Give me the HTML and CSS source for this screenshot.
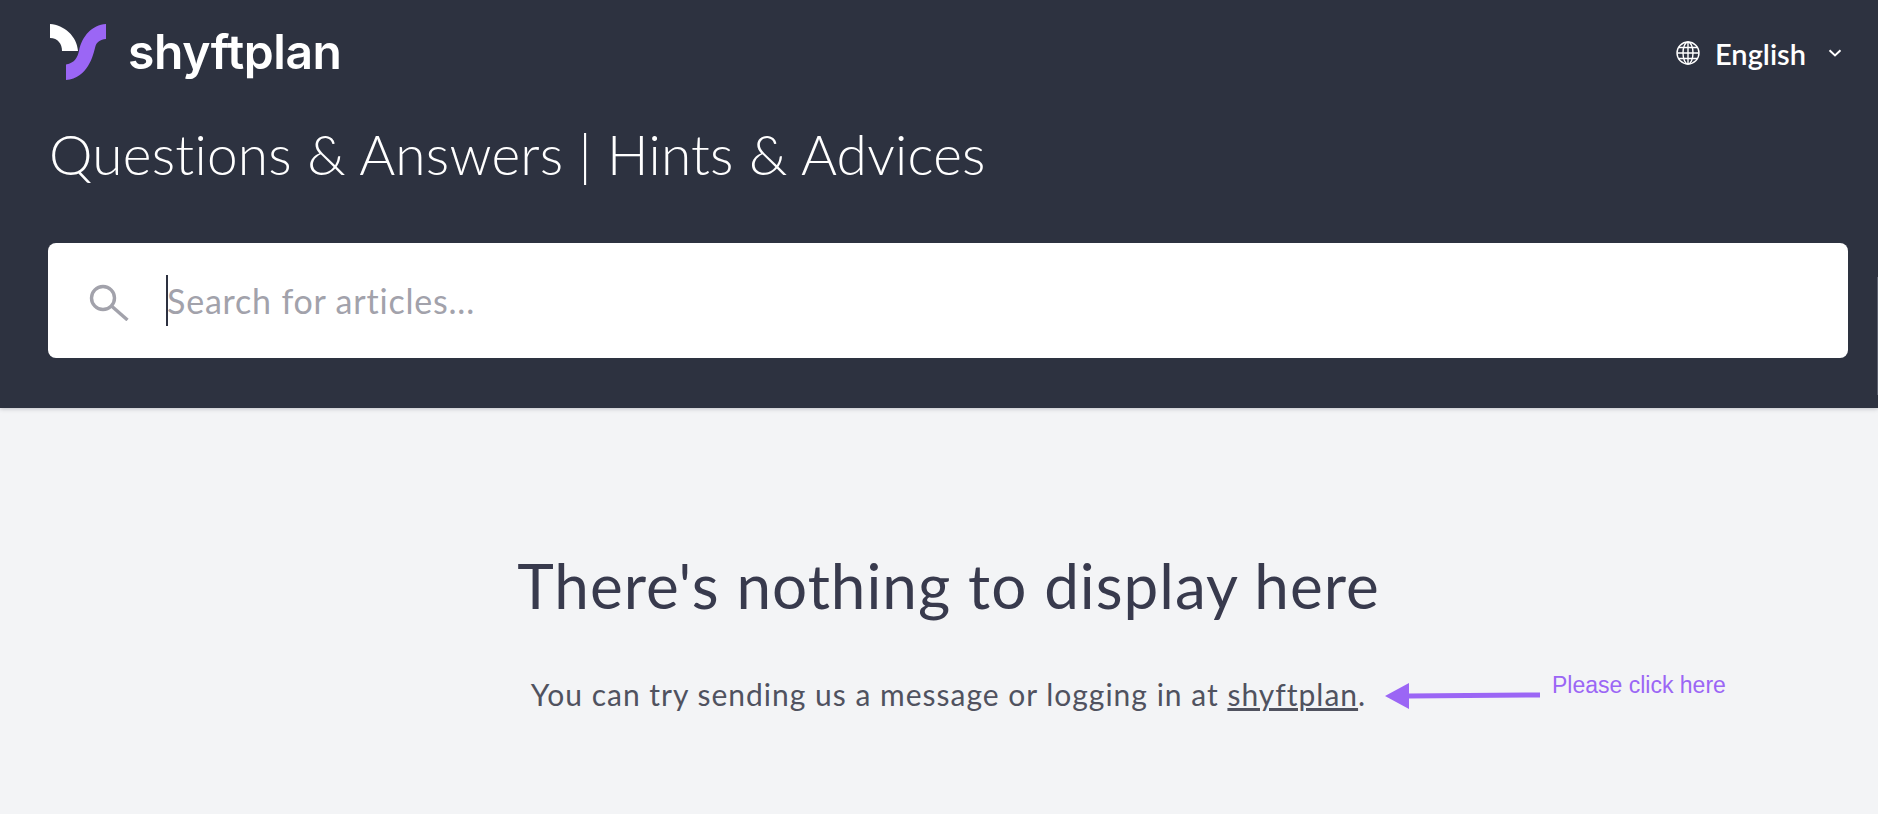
FILE: index.html
```html
<!DOCTYPE html>
<html>
  <head>
    <meta charset="UTF-8" />
    <title>shyftplan Help Center</title>
    <link rel="stylesheet" href="styles.css">
  </head>

  <body>
    <header class="header">
      <div class="topbar">
        <a class="brand" href="#">
          <svg class="brand-mark" viewBox="0 0 56 56">
            <path fill="#ffffff" d="M0 0C14 1 27 12 28 27L12 27C12 20 8 14 0 14Z" />
            <path fill="#9b66f5" d="M56 0L56 15C50 15.5 47 18 45.5 22C43 32 38 54 16 56L16 40.5C25 39 27.5 33 29 27C32 12 42 1 56 0Z" />
          </svg>
          <span class="brand-name">shyftplan</span>
        </a>
        <div class="lang">
          <svg class="lang-globe" viewBox="0 0 24 24" fill="none" stroke="#fff" stroke-width="1.4">
            <circle cx="12" cy="12" r="11" />
            <ellipse cx="12" cy="12" rx="5" ry="11" />
            <path d="M12 1V23M2.8 6.5H21.2M2.8 17.5H21.2M1 12H23" />
          </svg>
          <span class="lang-name">English</span>
          <svg class="lang-chevron" viewBox="0 0 14 8" fill="none" stroke="#fff" stroke-width="2">
            <path d="M1.5 1.2L7 6.4L12.5 1.2" />
          </svg>
        </div>
      </div>

      <h1 class="title">Questions &amp; Answers | Hints &amp; Advices</h1>

      <div class="search">
        <svg class="search-icon" viewBox="0 0 40 37" fill="none" stroke="#a2a2ab" stroke-width="3.4">
          <circle cx="14" cy="14" r="11.5" />
          <path d="M22.5 22L38.5 36" />
        </svg>
        <div class="search-field">
          <span class="caret"></span>
          <span class="placeholder">Search for articles...</span>
        </div>
      </div>
      <span class="scroll-sliver"></span>
    </header>

    <main class="empty">
      <h2 class="empty-title">There's nothing to display here</h2>
      <p class="empty-text">You can try sending us a message or logging in at <a href="#">shyftplan</a>.</p>
    </main>

    <svg class="note-arrow" viewBox="0 0 156 26">
      <path fill="#9b66f5" d="M0 13L24 0V10.5L155 9.5V14.5L24 15.5V26Z" />
    </svg>
    <span class="note-text">Please click here</span>
  </body>
</html>
```

FILE: styles.css
```css
html, body {
  height: 100%;
}

body {
  font-family: Lato, "Open Sans", sans-serif;
  font-variant-ligatures: none;
  margin: 0;
  padding: 0;
  background-color: #f3f4f6;
  overflow: hidden;
  position: relative;
}

.header {
  position: relative;
  box-sizing: border-box;
  height: 408px;
  padding: 24px 36px 0 48px;
  background-color: #2d3240;
  box-shadow: 0 1px 4px rgba(45, 49, 64, 0.25);
}

.topbar {
  display: flex;
  justify-content: space-between;
  align-items: flex-start;
  height: 56px;
}

.brand {
  display: flex;
  align-items: center;
  gap: 22px;
  margin-left: 2px;
  color: #fff;
  text-decoration: none;
}

.brand-mark {
  width: 56px;
  height: 56px;
}

.brand-name {
  font-family: Inter, sans-serif;
  font-size: 48px;
  font-weight: 600;
  letter-spacing: -0.4px;
  line-height: 56px;
  filter: blur(0.7px);
}

.lang {
  display: flex;
  align-items: center;
  height: 60px;
  margin-top: -1px;
  color: #fff;
}

.lang-globe {
  width: 24px;
  height: 24px;
  margin-right: 15px;
}

.lang-name {
  font-size: 29px;
  font-weight: 600;
  margin-right: 22px;
}

.lang-chevron {
  width: 14px;
  height: 8px;
}

.title {
  margin: 41px 0 0 1px;
  color: #fff;
  font-size: 55px;
  font-weight: 300;
  letter-spacing: 0.25px;
  line-height: 66px;
}

.search {
  display: flex;
  align-items: center;
  box-sizing: border-box;
  width: 1800px;
  height: 115px;
  margin-top: 56px;
  padding-left: 41px;
  background-color: #fff;
  border-radius: 8px;
}

.search-icon {
  width: 40px;
  height: 37px;
  margin-top: 3px;
}

.search-field {
  display: flex;
  align-items: center;
  margin-left: 37px;
}

.caret {
  width: 2px;
  height: 51px;
  background-color: #2d3140;
}

.placeholder {
  margin-left: -1px;
  color: #a2a2ab;
  font-size: 34px;
  letter-spacing: 0.8px;
}

.scroll-sliver {
  position: absolute;
  top: 277px;
  right: 0;
  width: 1px;
  height: 118px;
  background-color: #5d6270;
}

.empty {
  padding-top: 136px;
  text-align: center;
  margin-left: 19px;
}

.empty-title {
  margin: 0;
  color: #383a4d;
  font-size: 62px;
  font-weight: 400;
  letter-spacing: 1px;
  line-height: 82px;
}

.empty-text {
  margin: 48px 0 0;
  color: #50525f;
  font-size: 30px;
  letter-spacing: 1px;
  line-height: 40px;
}

.empty-text a {
  color: #50525f;
}

.note-arrow {
  position: absolute;
  top: 683px;
  left: 1385px;
  width: 156px;
  height: 26px;
}

.note-text {
  position: absolute;
  top: 671px;
  left: 1552px;
  color: #9b66f5;
  font-family: "Liberation Sans", Arial, sans-serif;
  font-size: 23px;
  line-height: 28px;
}
```
